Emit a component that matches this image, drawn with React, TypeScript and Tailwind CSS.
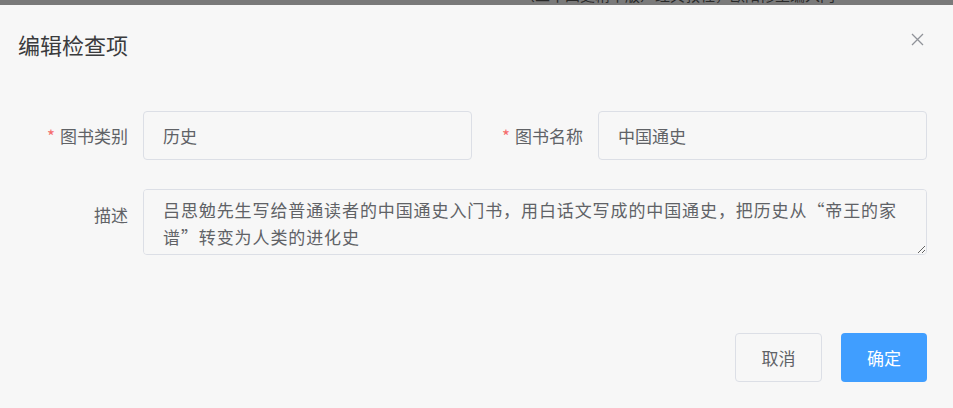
import { useState } from "react";

const font = { fontFamily: '"Noto Sans CJK SC", "Noto Sans", sans-serif' };

function Label({ text, required }: { text: string; required?: boolean }) {
  return (
    <div className="flex h-[49px] w-[123px] shrink-0 items-center justify-end pr-[15px] text-[17px] text-[#606266]">
      {required && <span className="mr-[5px] text-[#f56c6c]">*</span>}
      {text}
    </div>
  );
}

export default function App() {
  const [desc, setDesc] = useState(
    "吕思勉先生写给普通读者的中国通史入门书，用白话文写成的中国通史，把历史从“帝王的家谱”转变为人类的进化史"
  );

  return (
    <div className="h-[408px] w-[953px] overflow-hidden bg-[#f7f7f7]" style={font}>
      {/* page behind the modal */}
      <div className="h-[5px] overflow-hidden bg-[#7a7a7a]">
        <div className="-mt-[14px] whitespace-nowrap pl-[520px] text-[15px] leading-[18px] text-[#2a2a2a]">
          （二十四史精华版）经典教程，欧阳修主编入门
        </div>
      </div>

      <div className="flex flex-col">
        <div className="flex items-start justify-between pl-[18px] pr-[29px] pt-[25px]">
          <h2 className="text-[22px] leading-[29px] text-[#3a3b3d]">编辑检查项</h2>
          <button className="mt-[3px] text-[#909399]" aria-label="close">
            <svg width="13" height="13" viewBox="0 0 13 13">
              <path d="M1 1L12 12M12 1L1 12" stroke="currentColor" strokeWidth="1.3" fill="none" />
            </svg>
          </button>
        </div>

        <div className="mt-[52px] pl-[20px] pr-[26px]">
          <div className="grid grid-cols-2 gap-[3px]">
            <div className="flex">
              <Label text="图书类别" required />
              <input
                defaultValue="历史"
                className="h-[49px] w-full rounded-[4px] border border-[#dcdfe6] bg-[#f7f7f7] px-[19px] text-[17px] text-[#606266] outline-none"
              />
            </div>
            <div className="flex">
              <Label text="图书名称" required />
              <input
                defaultValue="中国通史"
                className="h-[49px] w-full rounded-[4px] border border-[#dcdfe6] bg-[#f7f7f7] px-[19px] text-[17px] text-[#606266] outline-none"
              />
            </div>
          </div>

          <div className="mt-[29px] flex">
            <div className="pt-[1px]">
              <Label text="描述" />
            </div>
            <textarea
              value={desc}
              onChange={(e) => setDesc(e.target.value)}
              className="h-[66px] w-full resize-y rounded-[4px] border border-[#dcdfe6] bg-[#f7f7f7] px-[19px] py-[6px] text-[17px] leading-[27px] tracking-[0.9px] text-[#606266] outline-none"
              style={font}
            />
          </div>

          <div className="mt-[78px] flex justify-end gap-[19px]">
            <button className="h-[49px] w-[87px] rounded-[4px] border border-[#dcdfe6] bg-[#f7f7f7] text-[17px] text-[#606266]">
              取消
            </button>
            <button className="h-[49px] w-[86px] rounded-[4px] bg-[#409eff] text-[17px] text-white">
              确定
            </button>
          </div>
        </div>
      </div>
    </div>
  );
}
